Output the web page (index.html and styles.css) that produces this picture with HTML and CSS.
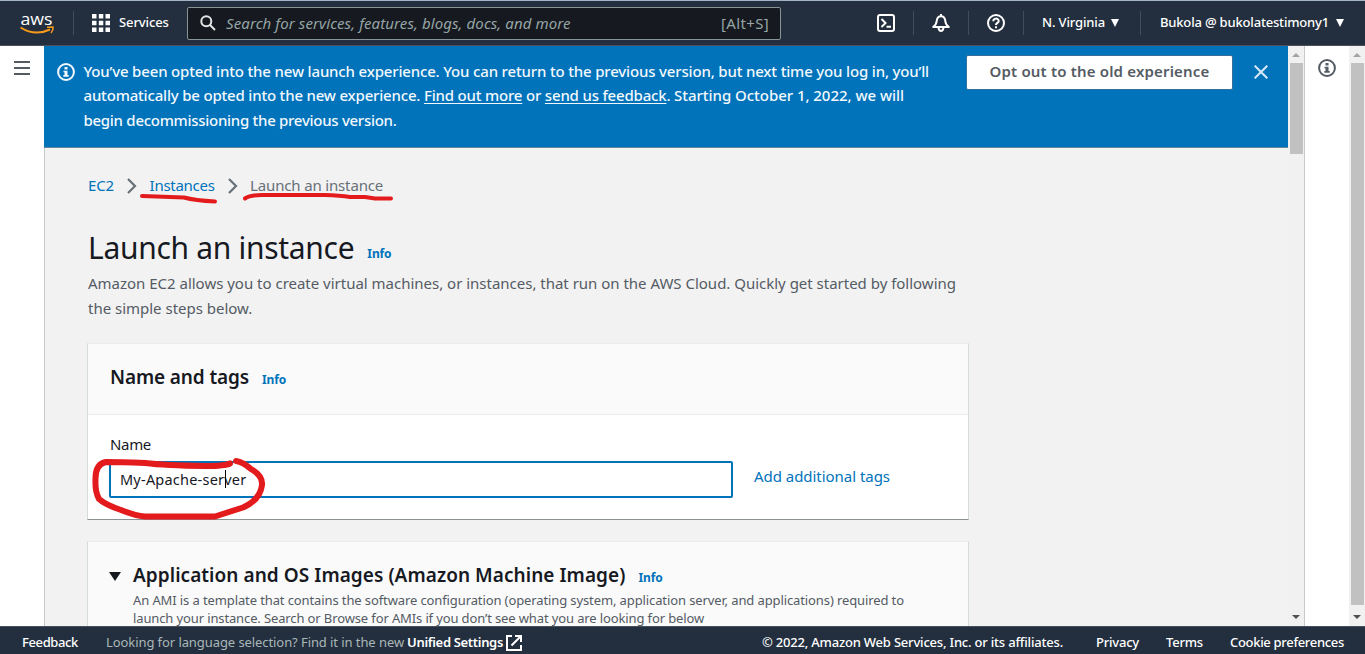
FILE: index.html
```html
<!DOCTYPE html>
<html lang="en">
<head>
<meta charset="utf-8">
<title>Launch an instance | EC2</title>
<link rel="stylesheet" href="styles.css">
</head>
<body>
<header class="topbar">
  <svg class="logo" width="35" height="34" viewBox="0 -8 35 34"><text class="logo-text" x="16.500" y="10.500" text-anchor="middle" textLength="32" lengthAdjust="spacingAndGlyphs">aws</text><path d="M0.500 13.500Q15 22.500 30 15.500" fill="none" stroke="#f79a1c" stroke-width="2"/><path d="M27 13.200L33 13Q33.500 16 31 19" fill="none" stroke="#f79a1c" stroke-width="1.500"/></svg>
  <span class="divider divider-logo"></span>
  <svg class="grid-icon" width="18" height="18" viewBox="0 0 18 18" fill="#fff"><path d="M0 0h4.500v4.500H0zM6.800 0h4.500v4.500H6.800zM13.500 0H18v4.500h-4.500zM0 6.800h4.500v4.500H0zM6.800 6.800h4.500v4.500H6.800zM13.500 6.800H18v4.500h-4.500zM0 13.500h4.500V18H0zM6.800 13.500h4.500V18H6.800zM13.500 13.500H18V18h-4.500z"/></svg>
  <span class="nav services">Services</span>
  <div class="search">
    <svg width="16" height="16" viewBox="0 0 16 16" fill="none" stroke="#e3e7e7" stroke-width="2"><circle cx="6.300" cy="6.300" r="5"/><path d="M10 10l5 5"/></svg>
    <span class="placeholder">Search for services, features, blogs, docs, and more</span>
    <span class="shortcut">[Alt+S]</span>
  </div>
  <div class="tools">
    <svg width="18" height="18" viewBox="0 0 18 18" fill="none" stroke="#fff" stroke-width="2"><rect x="1" y="1" width="16" height="16" rx="2"/><path d="M4.500 5l4 4-4 4M9.500 12.700h4.500"/></svg>
    <span class="divider"></span>
    <svg width="18" height="18" viewBox="0 0 18 18" fill="none" stroke="#fff" stroke-width="2" stroke-linejoin="round"><path d="M1.200 13h15.600Q13.600 10.500 13.300 7C13 3.500 11 2.300 9 2.300S5 3.500 4.700 7Q4.400 10.500 1.200 13zM9 2.300V0M6.500 13.500Q7 17 9 17t2.500-3.500"/></svg>
    <span class="divider"></span>
    <svg width="18" height="18" viewBox="0 0 18 18" fill="none" stroke="#fff" stroke-width="2"><circle cx="9" cy="9" r="8"/><path d="M6.300 7.200C6.300 3.800 11.700 3.800 11.700 7C11.700 9 9 8.800 9 11M9 12.300v2"/></svg>
    <span class="divider"></span>
    <span class="nav region">N. Virginia</span><i class="caret"></i>
    <span class="divider divider-user"></span>
    <span class="nav user">Bukola @ bukolatestimony1</span><i class="caret"></i>
  </div>
</header>

<div class="workspace">
  <aside class="left-rail"><svg width="16" height="15" viewBox="0 0 16 15" stroke="#545b64" stroke-width="2"><path d="M0 1h16M0 7h16M0 13h16"/></svg></aside>
  <main class="content">
    <section class="banner">
      <svg class="info-icon" width="18" height="18" viewBox="0 0 18 18"><circle cx="9" cy="9" r="7.900" fill="none" stroke="currentColor" stroke-width="2"/><path d="M7.500 4h3v2.500h-3zM6.500 7.700h4v4.300h1.200v1.800H6.300V12h1.200V9.300h-1z" fill="currentColor"/></svg>
      <div class="banner-text">
        <div class="b1">You’ve been opted into the new launch experience. You can return to the previous version, but next time you log in, you’ll</div>
        <div class="b2">automatically be opted into the new experience. <a>Find out more</a> or <a>send us feedback</a>. <span class="b2-end">Starting October 1, 2022, we will</span></div>
        <div class="b3">begin decommissioning the previous version.</div>
      </div>
      <button class="optout">Opt out to the old experience</button>
      <svg class="close" width="14" height="14" viewBox="0 0 14 14" stroke="#d9eaf5" stroke-width="2"><path d="M.7.7l12.600 12.600M13.300.7L.7 13.300"/></svg>
    </section>

    <nav class="crumbs">
      <a class="crumb-root">EC2</a>
      <svg width="10" height="16" viewBox="0 0 10 16"><path d="M1 1l7 7-7 7"/></svg>
      <a class="crumb-parent">Instances</a>
      <svg width="10" height="16" viewBox="0 0 10 16"><path d="M1 1l7 7-7 7"/></svg>
      <span class="crumb-current">Launch an instance</span>
    </nav>

    <div class="title-row"><h1>Launch an instance</h1><a class="info">Info</a></div>
    <div class="lead"><div>Amazon EC2 allows you to create virtual machines, or instances, that run on the AWS Cloud. Quickly get started by following</div><div>the simple steps below.</div></div>

    <section class="card">
      <div class="card-head"><h2>Name and tags</h2><a class="info">Info</a></div>
      <div class="card-body">
        <label>Name</label>
        <div class="field-row">
          <div class="field">My-Apache-server<i class="cursor"></i></div>
          <a class="add">Add additional tags</a>
        </div>
      </div>
    </section>

    <section class="card card-ami">
      <div class="ami-title"><i class="expander"></i><h2>Application and OS Images (Amazon Machine Image)</h2><a class="info">Info</a></div>
      <div class="ami-desc"><div>An AMI is a template that contains the software configuration (operating system, application server, and applications) required to</div><div>launch your instance. Search or Browse for AMIs if you don’t see what you are looking for below</div></div>
    </section>
    <svg class="marks" width="400" height="380" viewBox="80 160 400 380" fill="none" stroke="#e41b1d" stroke-linecap="round" stroke-linejoin="round">
      <path stroke-width="4" d="M142 196L184 197.500Q195 200.500 215 201.500M245 198.500Q250 195 262 195H325Q340 195.500 350 197H365L375 198.500H391"/>
      <path stroke-width="6" d="M230 463.500Q225 466 205 466Q165 465.500 145 463Q120 462 106 462Q95 464 95.500 480Q95 492 99 499Q106 505 121 510Q136 516 145 516.500H215Q232 511 243 507.500Q260 500 262 485Q263 476 251 469Q243 462 236 461"/>
    </svg>
  </main>
  <div class="scrollbar inner"><i class="up"></i><i class="thumb"></i><i class="down"></i></div>
  <aside class="right-rail"><svg width="18" height="18" viewBox="0 0 18 18"><circle cx="9" cy="9" r="7.900" fill="none" stroke="currentColor" stroke-width="2"/><path d="M7.500 4h3v2.500h-3zM6.500 7.700h4v4.300h1.200v1.800H6.300V12h1.200V9.300h-1z" fill="currentColor"/></svg></aside>
  <div class="scrollbar outer"><i class="up"></i><i class="thumb"></i><i class="down"></i></div>
</div>

<footer class="footer">
  <span class="nav feedback">Feedback</span>
  <span class="nav muted">Looking for language selection? Find it in the new</span>
  <span class="nav strong">Unified Settings</span>
  <svg class="ext" width="16" height="16" viewBox="0 0 16 16" fill="none" stroke="#fff" stroke-width="2"><path d="M6 1H1v14h14v-5M9 1h6v6M15 1L5.500 10.500"/></svg>
  <span class="nav copy">© 2022, Amazon Web Services, Inc. or its affiliates.</span>
  <span class="nav privacy">Privacy</span>
  <span class="nav terms">Terms</span>
  <span class="nav cookies">Cookie preferences</span>
</footer>
</body>
</html>
```
FILE: styles.css
```css
* { box-sizing: border-box; }
body { margin: 0; width: 1365px; height: 654px; overflow: hidden; display: flex; flex-direction: column; font: 15px/24.5px "Noto Sans", "Open Sans", sans-serif; color: #16191f; background: #fff; }
span, a, h1, h2, .banner-text div, .lead div, .ami-desc div { white-space: nowrap; }
svg { flex: none; display: block; }
h1, h2 { margin: 0; }
a { color: #0073bb; }

/* Top navigation */
.topbar { height: 46px; flex: none; background: #232f3e; border-top: 1px solid #a3b4c7; border-bottom: 1px solid #4c5059; display: flex; align-items: center; }
.logo { margin: -1px 0 0 20px; overflow: visible; }
.logo-text { font: 500 16px "Open Sans", sans-serif; fill: #fff; }
.divider { width: 1px; height: 24px; background: #414d5c; flex: none; }
.divider-logo { margin-left: 18px; }
.grid-icon { margin-left: 18px; }
.nav { font-size: 13px; line-height: 20px; font-weight: 500; color: #fff; flex: none; }
.topbar .nav { margin-top: -2px; }
.topbar .services { margin-left: 9px; width: 49px; letter-spacing: -.1px; }
.search { margin-left: 19px; width: 594px; height: 33px; background: #16191f; border: 1px solid #879596; border-radius: 2px; display: flex; align-items: center; padding: 0 11px 0 12px; color: #95a5a6; }
.placeholder { margin-left: 10px; font-style: italic; letter-spacing: .1px; }
.shortcut { margin-left: auto; letter-spacing: .348px; }
.tools { margin-left: 96px; display: flex; align-items: center; }
.tools .divider { margin: 0 18px; }
.region { letter-spacing: -.141px; }
.user { letter-spacing: -.183px; }
.caret { border: 4.5px solid transparent; border-top: 8px solid #fff; border-bottom: 0; margin: -1px 0 0 6px; }
.tools .divider-user { margin: 0 19px 0 21px; }
.tools .user + .caret { margin-left: 7px; }

/* Page frame */
.workspace { height: 580px; flex: none; display: flex; overflow: hidden; }
.left-rail { width: 44px; padding: 15px 14px; }
.content { width: 1244px; background: linear-gradient(to right, #c5c9cb 1px, #f2f2f2 1px); padding-left: 1px; position: relative; overflow: hidden; }

/* Notice */
.banner { height: 102px; margin-left: -1px; background: #0073bb; border-bottom: 1px solid #65859c; display: flex; align-items: flex-start; color: #f2f8fd; font-weight: 500; }
.banner .info-icon { margin: 17px 0 0 13px; }
.banner-text { margin: 13px 0 0 8.5px; width: 882.5px; line-height: 24.4px; }
.b1 { letter-spacing: -.168px; }
.b2 { letter-spacing: -.19px; }
.b2-end { letter-spacing: -.04px; }
.b3 { letter-spacing: -.284px; }
.banner a { color: inherit; text-decoration: underline; text-underline-offset: 2px; letter-spacing: -.19px; }
.optout { width: 267px; height: 35px; margin-top: 9px; padding: 0 0 4px; background: #fff; border: 1px solid #356f9b; border-radius: 2px; font: 600 15px/28px "Noto Sans", sans-serif; letter-spacing: .178px; color: #545b64; }
.close { margin: 19px 0 0 20.5px; }

.crumbs { display: flex; height: 24px; margin: 26px 0 0 43px; align-items: center; color: #687078; }
.crumbs a, .crumbs span { margin-top: -2px; }
.crumbs svg { fill: none; stroke: #687078; stroke-width: 2.2; margin: 0 12.5px 0 13px; }
.crumb-root { letter-spacing: -.1px; }
.crumb-parent { letter-spacing: -.278px; }
.crumb-current { letter-spacing: -.159px; }

.title-row { display: flex; align-items: baseline; margin: 28px 0 0 43px; height: 44px; }
h1 { font-size: 30px; line-height: 44px; font-weight: 400; letter-spacing: -.3px; }
.info { font-size: 12px; font-weight: 700; margin-left: 13px; letter-spacing: -.1px; }
.title-row .info { position: relative; top: -1px; }
.lead { margin: 1px 0 0 43px; color: #545b64; letter-spacing: -.011px; }

/* Cards */
.card { width: 882px; margin: 23px 0 0 42px; background: #fff; border: 1px solid #d5dbdb; border-top-color: #eaeded; border-bottom-color: #8b9093; height: 177px; }
.card-head { height: 71px; background: #fafafa; border-bottom: 1px solid #eaeded; padding: 20px 22px; display: flex; align-items: baseline; }
h2 { font-size: 19px; line-height: 26px; font-weight: 600; letter-spacing: -.126px; }
.card-body { padding: 17px 22px; }
label { display: block; height: 25px; letter-spacing: -.328px; }
.field-row { display: flex; margin: 4px 0 0 -1px; }
.field { width: 624px; height: 37px; border: 2px solid #0073bb; border-radius: 2px; padding: 0 9px; line-height: 32px; font-size: 14.5px; letter-spacing: .22px; position: relative; }
.cursor { position: absolute; left: 114px; top: 7px; width: 1px; height: 18px; background: #000; }
.add { margin: 3px 0 0 21px; letter-spacing: -.039px; }
.card-ami { height: 200px; margin-top: 21px; background: #fafafa; padding: 20px 22px; }
.ami-title { display: flex; align-items: baseline; height: 26px; }
.ami-title h2 { letter-spacing: .055px; }
.expander { border: 6px solid transparent; border-top: 9px solid #16191f; border-bottom: 0; margin: 0 12px 0 -1px; position: relative; top: -1px; }
.ami-desc { margin: 3px 0 0 23px; font-size: 13px; line-height: 18px; letter-spacing: -.11px; color: #545b64; }
.ami-desc div + div { letter-spacing: -.125px; }
.marks { position: absolute; left: 36px; top: 114px; }

/* Scrollbars and side panel */
.scrollbar { width: 16px; flex: none; background: #f1f1f1; display: flex; flex-direction: column; align-items: center; padding: 7px 0; }
.up { border: 4px solid transparent; border-bottom: 4px solid #a3a3a3; border-top: 0; }
.down { border: 4px solid transparent; border-top: 4px solid #505050; border-bottom: 0; margin-top: auto; }
.thumb { width: 13px; background: #c1c1c1; margin-top: 6px; height: 91px; }
.outer .thumb { height: 542px; }
.right-rail { width: 45px; border-left: 1px solid #c5c9cb; padding: 13px; color: #545b64; }

.footer { height: 28px; flex: none; background: #232f3e; border-top: 1px solid #45515e; display: flex; align-items: center; padding: 5px 21px 0 22px; }
.footer .nav { margin-top: -2px; }
.feedback { letter-spacing: -.375px; }
.footer .muted { margin-left: 28px; color: #aab7b8; font-weight: 400; letter-spacing: -.079px; }
.footer .strong { margin-left: 3px; font-weight: 600; letter-spacing: -.321px; }
.ext { margin-left: 3px; }
.footer .copy { margin-left: auto; letter-spacing: -.198px; }
.privacy { margin-left: 33px; letter-spacing: -.212px; }
.terms { margin-left: 27px; letter-spacing: -.2px; }
.cookies { margin-left: 27px; letter-spacing: -.313px; }
```
